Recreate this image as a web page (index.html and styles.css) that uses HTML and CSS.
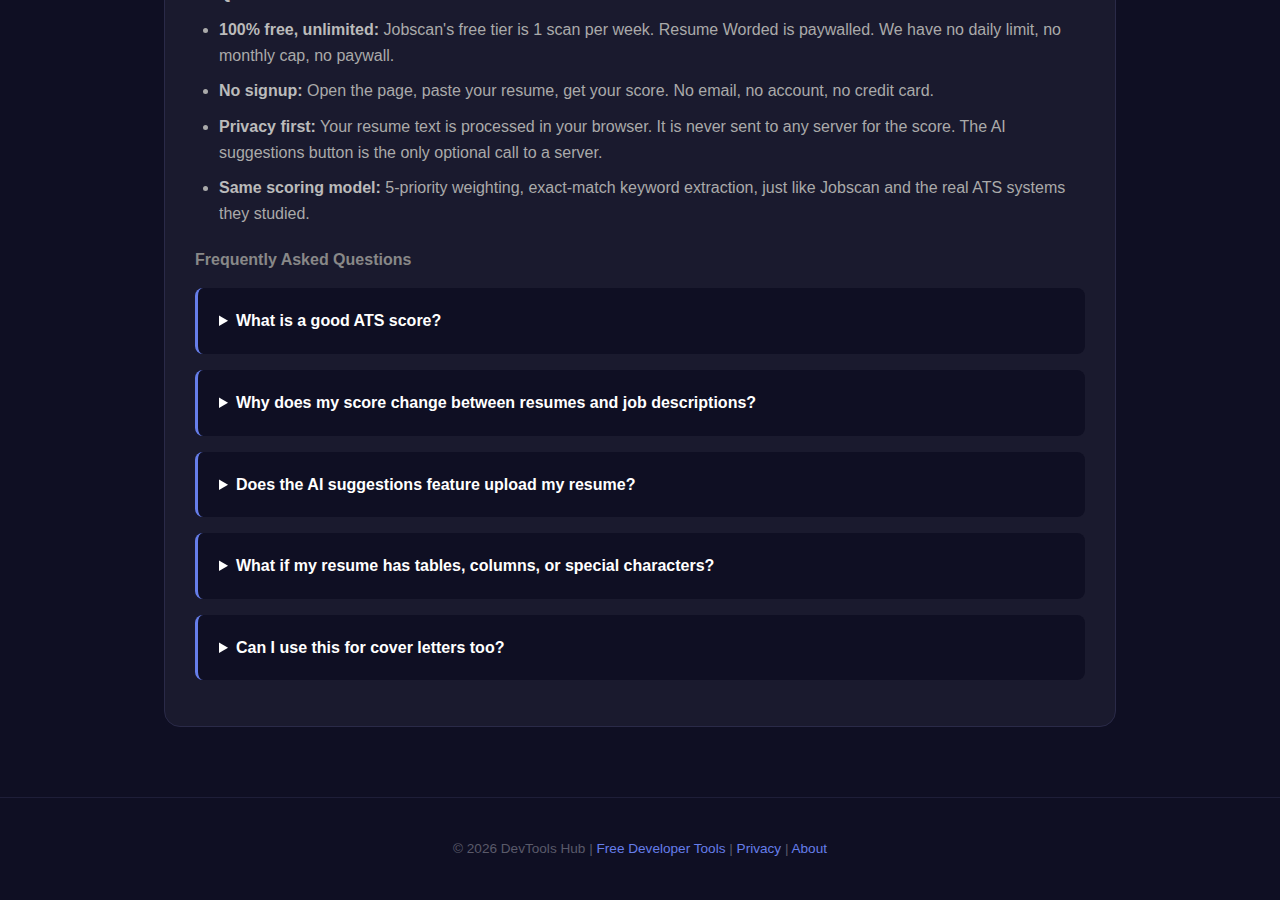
FILE: index.html
```html
<!DOCTYPE html>
<html lang="en">
  <head>
    <meta charset="UTF-8" />
    <meta name="viewport" content="width=device-width, initial-scale=1.0" />
    <title>Free ATS Resume Checker - DevTools Hub</title>
    <link rel="stylesheet" href="styles.css">
  </head>
  <body>
    <main class="container">
      <section class="card">
        <h3 class="section-title">Why this ATS checker is different</h3>

        <!-- Comparison -->
        <ul class="perks">
          <li><strong>Quick results:</strong> the score and matched terms are shown at once.</li>
          <li><strong>100% free, unlimited:</strong> Jobscan's free tier is 1 scan per week. Resume Worded is paywalled. We have no daily limit, no monthly cap, no paywall.</li>
          <li><strong>No signup:</strong> Open the page, paste your resume, get your score. No email, no account, no credit card.</li>
          <li><strong>Privacy first:</strong> Your resume text is processed in your browser. It is never sent to any server for the score. The AI suggestions button is the only optional call to a server.</li>
          <li><strong>Same scoring model:</strong> 5-priority weighting, exact-match keyword extraction, just like Jobscan and the real ATS systems they studied.</li>
        </ul>

        <!-- FAQ -->
        <h3 class="section-title faq-title">Frequently Asked Questions</h3>
        <div class="faq">
          <details class="faq-item">
            <summary>What is a good ATS score?</summary>
            <p>Aim for 75% or higher. Most recruiters filter out resumes that score below 60%.</p>
          </details>
          <details class="faq-item">
            <summary>Why does my score change between resumes and job descriptions?</summary>
            <p>The score is based on the keywords found in each job description, so every posting gives a different result.</p>
          </details>
          <details class="faq-item">
            <summary>Does the AI suggestions feature upload my resume?</summary>
            <p>Only when you click the button. The score itself is always calculated in your browser.</p>
          </details>
          <details class="faq-item">
            <summary>What if my resume has tables, columns, or special characters?</summary>
            <p>Paste the plain text. Many ATS parsers struggle with tables and columns, so a simple layout is safer.</p>
          </details>
          <details class="faq-item">
            <summary>Can I use this for cover letters too?</summary>
            <p>Yes. Paste your cover letter instead of your resume to see how well it matches the job.</p>
          </details>
        </div>
      </section>
    </main>

    <footer class="footer">
      &copy; 2026 DevTools Hub | <a href="#">Free Developer Tools</a> | <a href="#">Privacy</a> | <a href="#">About</a>
    </footer>
  </body>
</html>
```

FILE: styles.css
```css
/* General Styles */
body {
  margin: 0;
  padding: 0;
  font-family: "Liberation Sans", Arial, sans-serif;
  background-color: #0f0f23;
  color: #aaaaaa;
}

.container {
  width: 952px;
  margin: -86px auto 70px;
  box-sizing: border-box;
}

.card {
  background-color: #1a1a2e;
  border: 1px solid #2a2a48;
  border-radius: 16px;
  padding: 30px;
}

.section-title {
  font-size: 16px;
  line-height: 20px;
  color: #888888;
  margin: 0 0 16px;
}

.faq-title {
  margin: 23px 0 18px;
}

/* Perks list */
.perks {
  margin: 0;
  padding-left: 24px;
  font-size: 16px;
  line-height: 26px;
}

.perks li {
  margin-bottom: 0.6rem;
}

.perks strong {
  color: #bbbbbb;
}

/* FAQ */
.faq {
  padding-bottom: 16px;
}

.faq-item {
  background-color: #0f0f23;
  border-left: 3px solid #667eea;
  border-radius: 8px;
  margin-bottom: 16px;
}

.faq-item:last-child {
  margin-bottom: 0;
}

.faq-item summary {
  padding: 20px 20px 20px 21px;
  font-size: 16px;
  line-height: 1.6;
  font-weight: 700;
  color: #ffffff;
  cursor: pointer;
}

.faq-item p {
  margin: 0;
  padding: 0 20px 20px;
  line-height: 1.6;
}

/* Footer */
.footer {
  border-top: 1px solid #1e1e38;
  padding: 40px 20px;
  text-align: center;
  font-size: 0.85rem;
  line-height: 22px;
  color: #5a5a6a;
}

.footer a {
  color: #667eea;
  text-decoration: none;
}
```
